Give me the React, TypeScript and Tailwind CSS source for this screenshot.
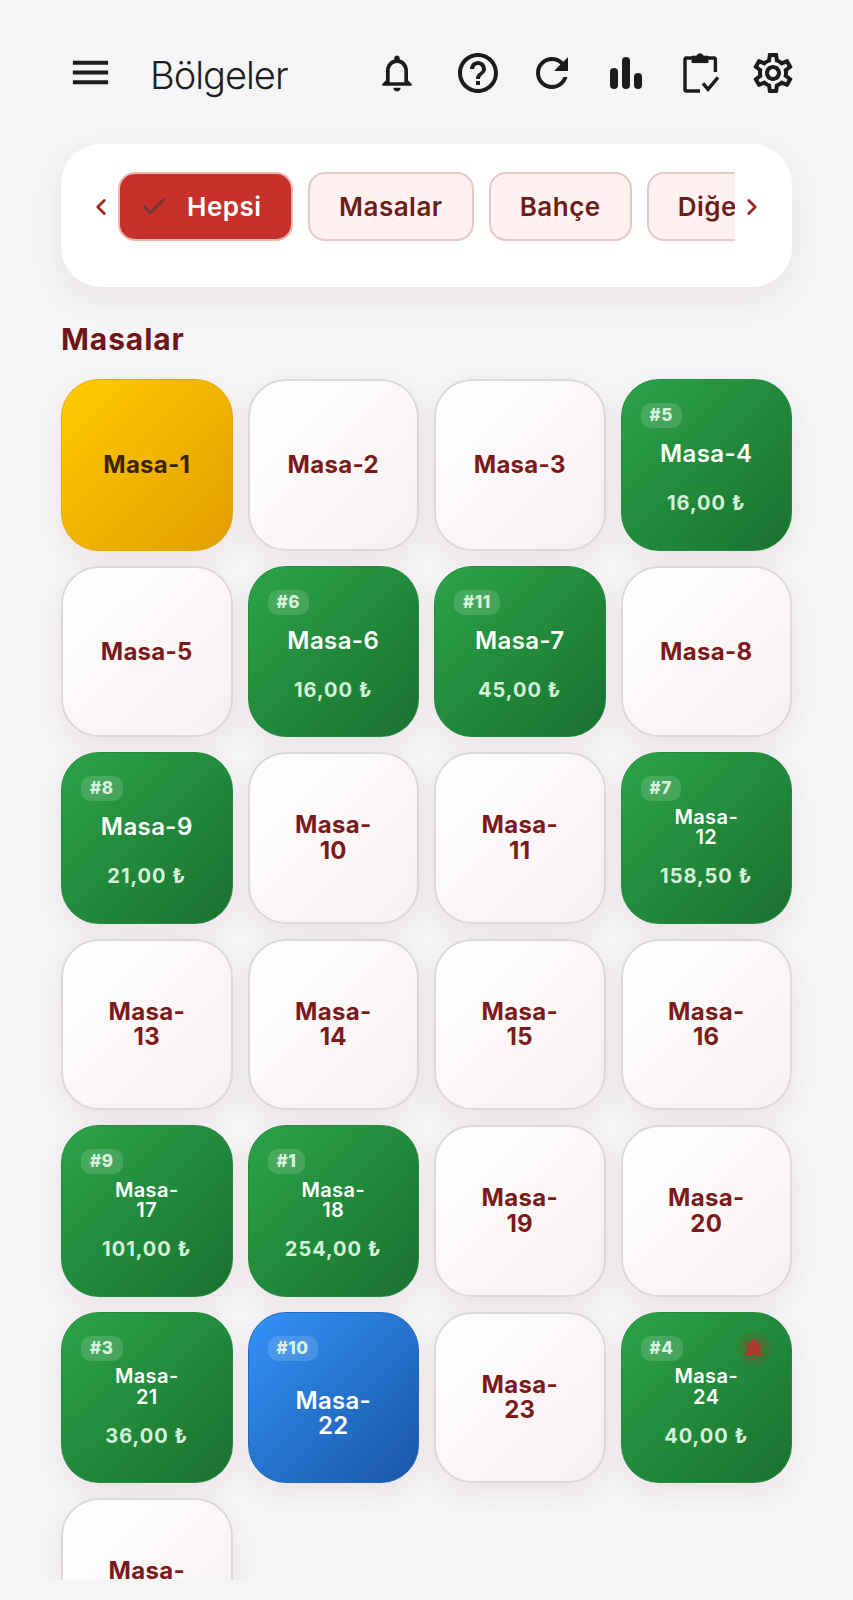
import React from "react";
import { ChevronLeft, ChevronRight, Check } from "lucide-react";

type T = { n: string; kind?: "y" | "g" | "b"; badge?: string; price?: string; bell?: boolean };

const tables: T[] = [
  { n: "Masa-1", kind: "y" },
  { n: "Masa-2" },
  { n: "Masa-3" },
  { n: "Masa-4", kind: "g", badge: "#5", price: "16,00 ₺" },
  { n: "Masa-5" },
  { n: "Masa-6", kind: "g", badge: "#6", price: "16,00 ₺" },
  { n: "Masa-7", kind: "g", badge: "#11", price: "45,00 ₺" },
  { n: "Masa-8" },
  { n: "Masa-9", kind: "g", badge: "#8", price: "21,00 ₺" },
  { n: "Masa-10" },
  { n: "Masa-11" },
  { n: "Masa-12", kind: "g", badge: "#7", price: "158,50 ₺" },
  { n: "Masa-13" },
  { n: "Masa-14" },
  { n: "Masa-15" },
  { n: "Masa-16" },
  { n: "Masa-17", kind: "g", badge: "#9", price: "101,00 ₺" },
  { n: "Masa-18", kind: "g", badge: "#1", price: "254,00 ₺" },
  { n: "Masa-19" },
  { n: "Masa-20" },
  { n: "Masa-21", kind: "g", badge: "#3", price: "36,00 ₺" },
  { n: "Masa-22", kind: "b", badge: "#10" },
  { n: "Masa-23" },
  { n: "Masa-24", kind: "g", badge: "#4", price: "40,00 ₺", bell: true },
  { n: "Masa-25" },
];

function Icon({ d, className }: { d: string; className?: string }) {
  return (
    <svg viewBox="0 0 24 24" fill="currentColor" className={className}>
      <path d={d} />
    </svg>
  );
}

const P = {
  menu: "M3 18h18v-2H3v2zm0-5h18v-2H3v2zm0-7v2h18V6H3z",
  bell: "M12 22c1.1 0 2-.9 2-2h-4c0 1.1.9 2 2 2zm6-6v-5c0-3.07-1.63-5.64-4.5-6.32V4c0-.83-.67-1.5-1.5-1.5s-1.5.67-1.5 1.5v.68C7.64 5.36 6 7.92 6 11v5l-2 2v1h16v-1l-2-2zm-2 1H8v-6c0-2.48 1.51-4.5 4-4.5s4 2.02 4 4.5v6z",
  help: "M11 18h2v-2h-2v2zm1-16C6.48 2 2 6.48 2 12s4.48 10 10 10 10-4.48 10-10S17.52 2 12 2zm0 18c-4.41 0-8-3.59-8-8s3.59-8 8-8 8 3.59 8 8-3.59 8-8 8zm0-14c-2.21 0-4 1.79-4 4h2c0-1.1.9-2 2-2s2 .9 2 2c0 2-3 1.75-3 5h2c0-2.25 3-2.5 3-5 0-2.21-1.79-4-4-4z",
  refresh: "M17.65 6.35C16.2 4.9 14.21 4 12 4c-4.42 0-7.99 3.58-7.99 8s3.57 8 7.99 8c3.73 0 6.84-2.55 7.73-6h-2.08c-.82 2.33-3.04 4-5.65 4-3.31 0-6-2.69-6-6s2.69-6 6-6c1.66 0 3.14.69 4.22 1.78L13 11h7V4l-2.35 2.35z",
  gear: "M19.43 12.98c.04-.32.07-.64.07-.98 0-.34-.03-.66-.07-.98l2.11-1.65c.19-.15.24-.42.12-.64l-2-3.46c-.09-.16-.26-.25-.44-.25-.06 0-.12.01-.17.03l-2.49 1c-.52-.4-1.08-.73-1.69-.98l-.38-2.65C14.46 2.18 14.25 2 14 2h-4c-.25 0-.46.18-.49.42l-.38 2.65c-.61.25-1.17.59-1.69.98l-2.49-1c-.06-.02-.12-.03-.18-.03-.17 0-.34.09-.43.25l-2 3.46c-.13.22-.07.49.12.64l2.11 1.65c-.04.32-.07.65-.07.98 0 .33.03.66.07.98l-2.11 1.65c-.19.15-.24.42-.12.64l2 3.46c.09.16.26.25.44.25.06 0 .12-.01.17-.03l2.49-1c.52.4 1.08.73 1.69.98l.38 2.65c.03.24.24.42.49.42h4c.25 0 .46-.18.49-.42l.38-2.65c.61-.25 1.17-.59 1.69-.98l2.49 1c.06.02.12.03.18.03.17 0 .34-.09.43-.25l2-3.46c.12-.22.07-.49-.12-.64l-2.11-1.65zm-1.98-1.71c.04.31.05.52.05.73 0 .21-.02.43-.05.73l-.14 1.13.89.7 1.08.84-.7 1.21-1.27-.51-1.04-.42-.9.68c-.43.32-.84.56-1.25.73l-1.06.43-.16 1.13-.2 1.35h-1.4l-.19-1.35-.16-1.13-1.06-.43c-.43-.18-.83-.41-1.23-.71l-.91-.7-1.06.43-1.27.51-.7-1.21 1.08-.84.89-.7-.14-1.13c-.03-.31-.05-.54-.05-.74s.02-.43.05-.73l.14-1.13-.89-.7-1.08-.84.7-1.21 1.27.51 1.04.42.9-.68c.43-.32.84-.56 1.25-.73l1.06-.43.16-1.13.2-1.35h1.39l.19 1.35.16 1.13 1.06.43c.43.18.83.41 1.23.71l.91.7 1.06-.43 1.27-.51.7 1.21-1.07.85-.89.7.14 1.13zM12 8c-2.21 0-4 1.79-4 4s1.79 4 4 4 4-1.79 4-4-1.79-4-4-4zm0 6c-1.1 0-2-.9-2-2s.9-2 2-2 2 .9 2 2-.9 2-2 2z",
};

function BarsIcon() {
  return (
    <svg viewBox="0 0 24 24" fill="currentColor" className="w-12 h-12">
      <rect x="4" y="9.5" width="4" height="10.5" rx="2" />
      <rect x="10" y="4" width="4" height="16" rx="2" />
      <rect x="16" y="12" width="4" height="8" rx="2" />
    </svg>
  );
}

function ClipboardIcon() {
  return (
    <svg viewBox="0 0 24 24" className="w-12 h-12" fill="none" stroke="currentColor">
      <path d="M12 21H5.2a.8.8 0 0 1-.7-.8V5.3a.8.8 0 0 1 .7-.8H19a.8.8 0 0 1 .7.8v6.2" strokeWidth="1.7" />
      <path d="M8 3.6h2.3a1.8 1.8 0 0 1 3.4 0H16V6.8H8z" fill="currentColor" strokeWidth="0.5" />
      <path d="M13.5 17.2l2.5 3 5-6" strokeWidth="1.7" />
    </svg>
  );
}

function Name({ n }: { n: string }) {
  if (n.length <= 6) return <>{n}</>;
  return (
    <>
      Masa-
      <br />
      {n.slice(5)}
    </>
  );
}

function Card({ t }: { t: T }) {
  const base =
    "relative aspect-square rounded-[38px] flex flex-col items-center text-center font-bold shadow-[0_10px_30px_rgba(130,40,40,0.09)]";
  const cls =
    t.kind === "y"
      ? "border-[1.5px] bg-gradient-to-br from-[#ffcc00] to-[#e29e00] border-[#e5a50a] text-[#3a2405] justify-center"
      : t.kind === "g"
        ? "border-[1.5px] bg-gradient-to-br from-[#2ba348] to-[#1a7230] border-[#238a3e] text-white"
        : t.kind === "b"
          ? "border-[1.5px] bg-gradient-to-br from-[#3292f7] to-[#1a57a8] border-[#2168c4] text-white justify-center"
          : "border-2 bg-gradient-to-br from-white to-[#f8f0f0] border-[#dcd9dd] text-[#7a1a1a] justify-center";
  const twoLine = t.n.length > 6;
  return (
    <div className={`${base} ${cls}`}>
      {t.badge && (
        <span className="absolute left-[19px] top-[23px] h-[25px] px-[9px] rounded-[10px] bg-white/15 font-extrabold text-[17px] leading-[25px] tracking-[0.6px] text-[#d8f2de]">
          {t.badge}
        </span>
      )}
      {t.bell && (
        <span className="absolute right-[20px] top-[19px] w-[34px] h-[34px] rounded-full bg-[#a93d2c]/15 flex items-center justify-center text-[#a93d2c]">
          <svg viewBox="0 0 24 24" className="w-[28px] h-[28px]">
            <path fill="currentColor" d="M12 21c1.1 0 2-.9 2-2h-4c0 1.1.9 2 2 2zm6-6v-4.500c0-3.070-1.630-5.140-4.500-5.820V4.500c0-.83-.67-1.500-1.500-1.500s-1.500.67-1.500 1.500v.18C7.640 5.360 6 7.420 6 10.500V15l-2 2v1h16v-1l-2-2z" />
            <path fill="none" stroke="currentColor" strokeWidth="1.2" d="M4.500 5.500L3 9M19.500 5.500L21 9" />
          </svg>
        </span>
      )}
      {t.kind === "g" ? (
        <>
          <div className="h-[60px] mt-[44px] flex items-center justify-center">
            <span className={twoLine ? "text-[20px] leading-[20.5px] tracking-[0.4px] font-semibold" : "text-[24px] leading-[26px] tracking-[0.4px] font-semibold"}>
              <Name n={t.n} />
            </span>
          </div>
          <div className="mt-[7px] text-[20px] leading-[24px] tracking-[1px] text-[#d4f2da]">{t.price}</div>
        </>
      ) : (
        <span className={`text-[24px] leading-[25.5px] tracking-[0.3px] ${t.kind === "b" ? "mt-[32px] font-semibold" : ""}`}>
          <Name n={t.n} />
        </span>
      )}
    </div>
  );
}

export default function App() {
  const btn =
    "shrink-0 h-[69px] rounded-[17px] border-2 flex items-center text-[26px] font-semibold tracking-[0.5px]";
  return (
    <div className="w-[853px] h-[1600px] bg-[#f5f5f8] overflow-hidden" style={{ fontFamily: "Inter, 'Noto Sans', sans-serif" }}>
      <div className="h-[1580px] overflow-hidden">
        <header className="h-[144px] flex items-start text-[#1c1c1f] pt-[49px]">
          <Icon d={P.menu} className="w-[47px] h-[47px] ml-[67px]" />
          <h1 className="ml-[36px] text-[38px] leading-[52px] font-light tracking-[-1px]">Bölgeler</h1>
          <div className="ml-auto mr-[56px] flex items-center">
            <Icon d={P.bell} className="w-11 h-11 mr-[35px]" />
            <Icon d={P.help} className="w-12 h-12 mr-[26px]" />
            <Icon d={P.refresh} className="w-12 h-12 mr-[26px]" />
            <BarsIcon />
            <div className="ml-[26px]"><ClipboardIcon /></div>
            <Icon d={P.gear} className="w-12 h-12 ml-[25px]" />
          </div>
        </header>

        <section className="mx-[61px] h-[143px] rounded-[40px] bg-white shadow-[0_12px_36px_rgba(130,60,60,0.09)] pt-[28px] pl-[25px] pr-[23px] flex items-start">
          <div className="w-[32px] h-[69px] flex items-center justify-center text-[#9c2a24]">
            <ChevronLeft size={26} strokeWidth={2.6} className="-ml-[3px]" />
          </div>
          <div className="flex-1 min-w-0 overflow-hidden flex gap-[15px]">
            <div className={`${btn} w-[175px] bg-[#c6322a] border-[#f0b4ae] text-white pl-[20px]`}>
              <Check size={28} strokeWidth={2.4} className="text-[#6e3733]" />
              <span className="ml-[19px]">Hepsi</span>
            </div>
            <div className={`${btn} px-[29px] bg-[#fff1f0] border-[#e6c9c5] text-[#6b1d1a]`}>Masalar</div>
            <div className={`${btn} px-[29px] bg-[#fff1f0] border-[#e6c9c5] text-[#6b1d1a]`}>Bahçe</div>
            <div className={`${btn} px-[29px] bg-[#fff1f0] border-[#e6c9c5] text-[#6b1d1a]`}>Diğer</div>
          </div>
          <div className="w-[34px] h-[69px] flex items-center justify-center text-[#9c2a24]">
            <ChevronRight size={26} strokeWidth={2.6} />
          </div>
        </section>

        <h2 className="mx-[61px] mt-[34px] text-[30px] leading-[36px] font-bold tracking-[0.9px] text-[#6f1616]">Masalar</h2>

        <main className="mx-[61px] mt-[22px] grid grid-cols-4 gap-[15px]">
          {tables.map((t) => (
            <Card key={t.n} t={t} />
          ))}
        </main>
      </div>
    </div>
  );
}
